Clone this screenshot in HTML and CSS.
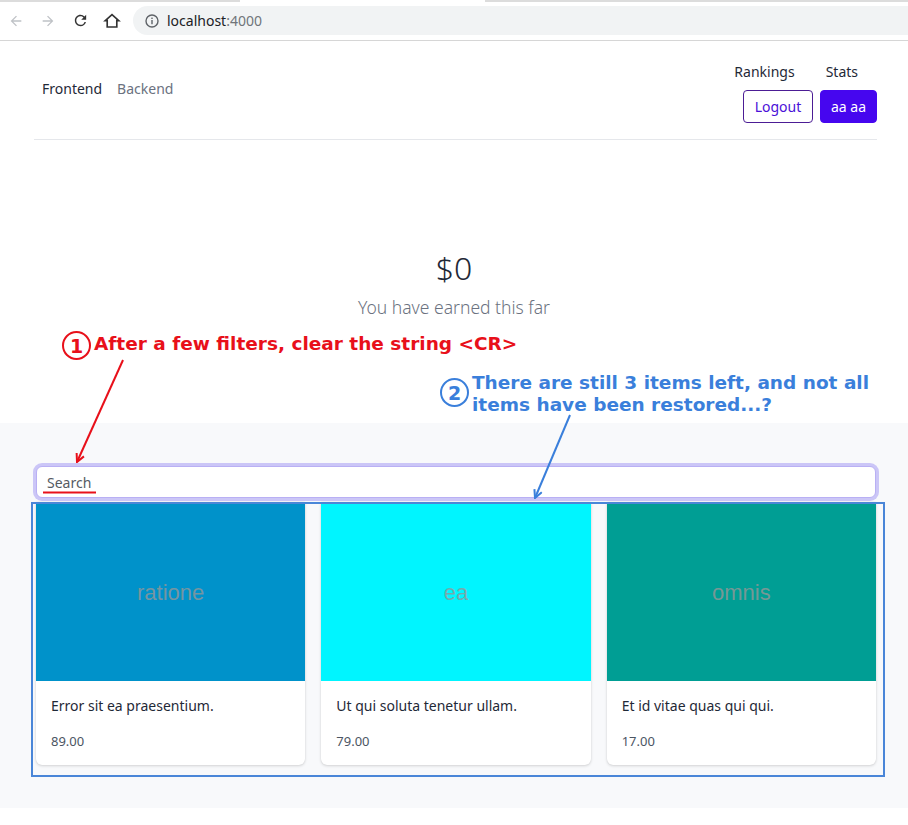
FILE: index.html
```html
<!DOCTYPE html>
<html>
<head>
<meta charset="utf-8">
<title>localhost:4000</title>
<link rel="stylesheet" href="styles.css">
</head>
<body>
<div class="tabstrip"><span class="strip-l"></span><span class="strip-gap"></span><span class="strip-r"></span></div>
<div class="toolbar">
  <span class="tb-btn">
    <svg width="16" height="16" viewBox="0 0 24 24"><path d="M20 11H7.83l5.59-5.59L12 4l-8 8 8 8 1.41-1.41L7.83 13H20v-2z" fill="#bfc2c6"/></svg>
  </span>
  <span class="tb-btn">
    <svg width="16" height="16" viewBox="0 0 24 24"><path d="M4 11h12.17l-5.59-5.59L12 4l8 8-8 8-1.41-1.41L16.17 13H4v-2z" fill="#bfc2c6"/></svg>
  </span>
  <span class="tb-btn">
    <svg width="17" height="17" viewBox="0 0 24 24"><path d="M17.65 6.35A7.958 7.958 0 0 0 12 4c-4.42 0-7.99 3.58-7.99 8s3.57 8 7.99 8c3.730 0 6.84-2.55 7.73-6h-2.08A5.99 5.99 0 0 1 12 18c-3.31 0-6-2.69-6-6s2.69-6 6-6c1.66 0 3.14.69 4.22 1.78L13 11h7V4l-2.35 2.35z" fill="#333"/></svg>
  </span>
  <span class="tb-btn">
    <svg width="18" height="18" viewBox="0 0 24 24"><path d="M12 3.5L3 11.5h2.6V20h12.8v-8.5H21z" fill="none" stroke="#333" stroke-width="2.2" stroke-linejoin="miter"/></svg>
  </span>
  <div class="omnibox">
    <svg class="info" width="14" height="14" viewBox="0 0 14 14"><circle cx="7" cy="7" r="6" fill="none" stroke="#5f6368" stroke-width="1.4"/><rect x="6.3" y="6" width="1.4" height="4.2" fill="#5f6368"/><rect x="6.3" y="3.6" width="1.4" height="1.4" fill="#5f6368"/></svg>
    <span class="host">localhost</span><span class="port">:4000</span>
  </div>
</div>

<div class="page">
  <header class="header">
    <nav class="nav-left">
      <a class="nav-link active">Frontend</a>
      <a class="nav-link">Backend</a>
    </nav>
    <div class="nav-right">
      <div class="nav-top">
        <a class="nav-link dark">Rankings</a>
        <a class="nav-link dark">Stats</a>
      </div>
      <div class="nav-buttons">
        <button class="btn btn-outline">Logout</button>
        <button class="btn btn-solid">aa aa</button>
      </div>
    </div>
  </header>

  <section class="hero">
    <div class="amount">$0</div>
    <div class="subtitle">You have earned this far</div>
  </section>

  <section class="shop">
    <div class="shop-inner">
      <div class="search">Search</div>
      <div class="grid">
        <div class="card">
          <div class="card-img img-blue"><span>ratione</span></div>
          <div class="card-body">
            <div class="card-title">Error sit ea praesentium.</div>
            <div class="card-price">89.00</div>
          </div>
        </div>
        <div class="card">
          <div class="card-img img-cyan"><span>ea</span></div>
          <div class="card-body">
            <div class="card-title">Ut qui soluta tenetur ullam.</div>
            <div class="card-price">79.00</div>
          </div>
        </div>
        <div class="card">
          <div class="card-img img-teal"><span>omnis</span></div>
          <div class="card-body">
            <div class="card-title">Et id vitae quas qui qui.</div>
            <div class="card-price">17.00</div>
          </div>
        </div>
      </div>
    </div>
  </section>
  <div class="page-foot"></div>
</div>

<svg class="annot" width="908" height="825" viewBox="0 0 908 825">
  <defs>
    <marker id="ahr" viewBox="0 0 10 10" refX="9" refY="5" markerWidth="10" markerHeight="10" markerUnits="userSpaceOnUse" orient="auto">
      <path d="M1 1L9 5L1 9" fill="none" stroke="#e8101a" stroke-width="2"/>
    </marker>
    <marker id="ahb" viewBox="0 0 10 10" refX="9" refY="5" markerWidth="10" markerHeight="10" markerUnits="userSpaceOnUse" orient="auto">
      <path d="M1 1L9 5L1 9" fill="none" stroke="#3a7fdb" stroke-width="2"/>
    </marker>
  </defs>
  <rect x="32" y="503" width="852" height="273" fill="none" stroke="#4a86d8" stroke-width="2"/>
  <line x1="43" y1="492.5" x2="96" y2="492.5" stroke="#e8101a" stroke-width="2"/>
  <line x1="123" y1="360" x2="77" y2="462" stroke="#e8101a" stroke-width="2" marker-end="url(#ahr)"/>
  <line x1="570" y1="415" x2="535" y2="498" stroke="#3a7fdb" stroke-width="2" marker-end="url(#ahb)"/>
  <circle cx="76.5" cy="345.5" r="13.5" fill="none" stroke="#e8101a" stroke-width="2"/>
  <text x="76.5" y="352.5" class="num red">1</text>
  <text x="94" y="350" class="ann red">After a few filters, clear the string &lt;CR&gt;</text>
  <circle cx="454.5" cy="392.5" r="13.5" fill="none" stroke="#3a7fdb" stroke-width="2"/>
  <text x="454.5" y="399.5" class="num blue">2</text>
  <text x="472" y="389" class="ann blue">There are still 3 items left, and not all</text>
  <text x="472" y="411" class="ann blue">items have been restored...?</text>
</svg>
</body>
</html>
```

FILE: styles.css
```css
* { box-sizing: border-box; }
html, body { margin: 0; padding: 0; background: #fff; }
body {
  width: 908px;
  height: 825px;
  overflow: hidden;
  position: relative;
  font-family: "Noto Sans", "Open Sans", sans-serif;
  color: #1f2937;
}

/* browser chrome */
.tabstrip { display: flex; height: 2px; }
.strip-l { width: 240px; background: #dcdcdc; }
.strip-gap { width: 245px; background: #fff; }
.strip-r { flex: 1; background: #dcdcdc; }
.toolbar {
  height: 39px;
  display: flex;
  align-items: center;
  border-bottom: 1px solid #d6d6d6;
  padding-bottom: 1px;
}
.tb-btn {
  width: 32px;
  height: 29px;
  display: flex;
  align-items: center;
  justify-content: center;
  flex: none;
}
.omnibox {
  margin-left: 5px;
  flex: 1;
  height: 29px;
  background: #f1f3f4;
  border-radius: 15px 0 0 15px;
  display: flex;
  align-items: center;
  padding-left: 12px;
  font-family: "Noto Sans", sans-serif;
  font-size: 14px;
}
.info { margin-right: 8px; }
.host { color: #202124; }
.port { color: #70757a; }

/* app */
.page { width: 908px; }
.header {
  margin: 0 31px 0 34px;
  height: 99px;
  border-bottom: 1px solid #e5e7eb;
  display: flex;
  justify-content: space-between;
}
.nav-left {
  display: flex;
  align-items: center;
  gap: 15px;
  padding-left: 8px;
  padding-bottom: 3px;
  font-size: 14px;
}
.nav-link { color: #6b7280; text-decoration: none; cursor: pointer; }
.nav-link.active { color: #1f2937; }
.nav-link.dark { color: #1f2937; }
.nav-right {
  display: flex;
  flex-direction: column;
  align-items: flex-end;
  padding-top: 21px;
}
.nav-top {
  display: flex;
  gap: 31px;
  font-size: 14px;
  line-height: 20px;
  padding-right: 19px;
}
.nav-buttons {
  display: flex;
  gap: 7px;
  margin-top: 8px;
}
.btn {
  height: 33px;
  border-radius: 4px;
  font-family: "Noto Sans", sans-serif;
  font-size: 14px;
  padding: 0;
  white-space: nowrap;
  cursor: pointer;
}
.btn-outline {
  background: #fff;
  border: 1px solid #4c1d95;
  color: #4a10d8;
  width: 70px;
}
.btn-solid {
  background: #4606ef;
  border: 1px solid #4606ef;
  color: #fff;
  width: 57px;
}

.hero {
  height: 283px;
  padding-top: 107px;
  text-align: center;
}
.amount {
  font-size: 32px;
  font-weight: 300;
  line-height: 42px;
  color: #1f2937;
}
.subtitle {
  margin-top: 6px;
  font-size: 17.5px;
  font-weight: 300;
  line-height: 24px;
  color: #6b7280;
}

.shop {
  background: #f8f9fb;
  height: 385px;
  padding-top: 43px;
}
.shop-inner {
  margin: 0 32px 0 36px;
}
.search {
  height: 32px;
  background: #fff;
  border: 1px solid #b9b0f4;
  border-radius: 6px;
  box-shadow: 0 0 0 3px #cbc6f7;
  padding-left: 10px;
  display: flex;
  align-items: center;
  font-size: 14px;
  color: #555b63;
}
.grid {
  margin-top: 4px;
  display: grid;
  grid-template-columns: repeat(3, 1fr);
  gap: 16px;
}
.card {
  background: #fff;
  border-radius: 0 0 6px 6px;
  box-shadow: 0 1px 3px rgba(0,0,0,0.15), 0 0 1px rgba(0,0,0,0.12);
  overflow: hidden;
}
.card-img {
  height: 179px;
  padding-top: 2px;
  display: flex;
  align-items: center;
  justify-content: center;
  font-family: "Liberation Sans", Arial, sans-serif;
  font-size: 22px;
  color: rgba(150,150,150,0.8);
}
.img-blue { background: #0092ca; }
.img-cyan { background: #00f5ff; }
.img-teal { background: #009e94; }
.card-body {
  padding: 15px 15px 14px;
}
.card-title {
  font-size: 14px;
  line-height: 20px;
  color: #1f2937;
}
.card-price {
  margin-top: 15px;
  font-size: 13px;
  line-height: 20px;
  color: #4b5563;
}
.page-foot { height: 17px; background: #fff; }

/* annotations overlay */
.annot {
  position: absolute;
  left: 0;
  top: 0;
  pointer-events: none;
}
.ann {
  font-family: "DejaVu Sans", sans-serif;
  font-weight: bold;
  font-size: 18.5px;
}
.num {
  font-family: "DejaVu Sans", sans-serif;
  font-weight: bold;
  font-size: 19px;
  text-anchor: middle;
}
.red { fill: #e8101a; }
.blue { fill: #3a7fdb; }
```
